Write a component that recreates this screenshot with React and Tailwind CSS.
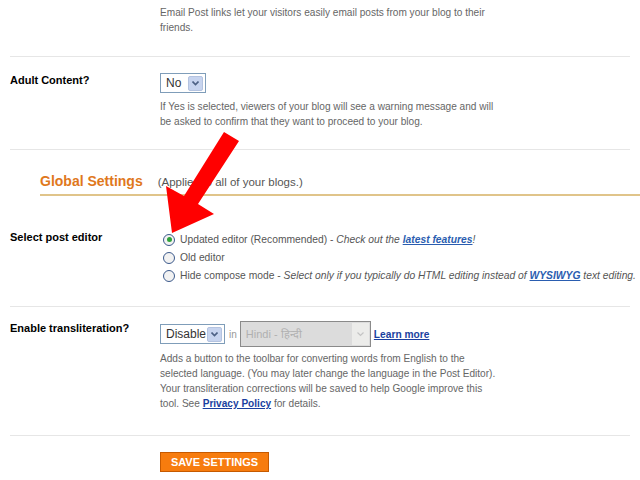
import React from 'react';

const Sep = () => <div className="mx-[10px] border-t border-[#e6e6e6]" />;

const Select = ({ label, className }) => (
  <div className={`flex h-[20px] items-center border border-[#7f9db9] bg-white pl-[5px] pr-[2px] ${className}`}>
    <span className="flex-1 text-[12px] text-[#333]">{label}</span>
    <span className="flex h-[15px] w-[15px] items-center justify-center rounded-[2px] border border-[#b4c3e0] bg-[#c7d4ef]">
      <svg width="7" height="5" viewBox="0 0 7 5"><path d="M0.5 0.5 L3.5 3.5 L6.5 0.5" stroke="#4d6185" strokeWidth="1.6" fill="none" /></svg>
    </span>
  </div>
);

const Radio = ({ checked }) => (
  <span className="flex h-[12px] w-[12px] shrink-0 items-center justify-center rounded-full border border-[#3c5a8c] bg-[#f2f2f2]">
    {checked && <span className="h-[5px] w-[5px] rounded-full bg-[#2ea23a]" />}
  </span>
);

const Label = ({ children }) => (
  <div className="w-[160px] shrink-0 pl-[10px] text-[11px] font-bold text-black">{children}</div>
);

export default function App() {
  return (
    <div className="relative h-[480px] w-[640px] overflow-hidden bg-white font-['Liberation_Sans',Arial,sans-serif] text-[10.1px] leading-[15px] text-[#666]">
      <div className="pl-[160px] pt-[5px] pb-[21px]">
        <p>Email Post links let your visitors easily email posts from your blog to their</p>
        <p>friends.</p>
      </div>
      <Sep />

      <div className="flex pt-[16px] pb-[20px]">
        <Label>Adult Content?</Label>
        <div>
          <Select label="No" className="w-[46px]" />
          <div className="pt-[6px]">
            <p>If Yes is selected, viewers of your blog will see a warning message and will</p>
            <p>be asked to confirm that they want to proceed to your blog.</p>
          </div>
        </div>
      </div>
      <Sep />

      <div className="ml-[40px] mt-[24px] flex items-baseline gap-[15px] border-b-2 border-[#e0c48a] pb-[4px]">
        <span className="text-[14px] font-bold text-[#e0781c]">Global Settings</span>
        <span className="text-[11.5px] text-[#555]">(Applies to all of your blogs.)</span>
      </div>

      <div className="flex pt-[34px] pb-[23px]">
        <Label>Select post editor</Label>
        <div className="flex flex-col gap-[3px] pt-[2px] pl-[3px] text-[10.3px] text-[#555]">
          <div className="flex items-center gap-[5px]">
            <Radio checked />
            <span>Updated editor (Recommended) - <i>Check out the <a className="font-bold text-[#2a5db0] underline">latest features</a>!</i></span>
          </div>
          <div className="flex items-center gap-[5px]">
            <Radio />
            <span>Old editor</span>
          </div>
          <div className="flex items-center gap-[5px]">
            <Radio />
            <span>Hide compose mode - <i>Select only if you typically do HTML editing instead of <a className="font-bold text-[#2a5db0] underline">WYSIWYG</a> text editing.</i></span>
          </div>
        </div>
      </div>
      <Sep />

      <div className="flex pt-[14px] pb-[24px]">
        <Label>Enable transliteration?</Label>
        <div>
          <div className="flex items-center">
            <Select label="Disable" className="w-[65px]" />
            <span className="ml-[4px] mr-[3px] text-[#999]">in</span>
            <div className="flex h-[26px] w-[131px] items-center border border-[#8a8a8a] bg-[#dcdcdc] pl-[5px]">
              <span className="flex-1 text-[11px] text-[#b0b0b0]">Hindi - हिन्दी</span>
              <span className="mr-[1px] flex h-[22px] w-[17px] items-center justify-center bg-[#ececea]">
                <svg width="7" height="5" viewBox="0 0 7 5"><path d="M0.5 0.5 L3.5 3.5 L6.5 0.5" stroke="#c4c4c4" strokeWidth="1.2" fill="none" /></svg>
              </span>
            </div>
            <a className="ml-[3px] text-[10.2px] font-bold text-[#1a3fa0] underline">Learn more</a>
          </div>
          <div className="pt-[4px]">
            <p>Adds a button to the toolbar for converting words from English to the</p>
            <p>selected language. (You may later change the language in the Post Editor).</p>
            <p>Your transliteration corrections will be saved to help Google improve this</p>
            <p>tool. See <a className="font-bold text-[#1a3fa0] underline">Privacy Policy</a> for details.</p>
          </div>
        </div>
      </div>
      <Sep />

      <div className="pl-[160px] pt-[16px]">
        <button className="h-[20px] w-[109px] border border-[#c65a00] bg-[#f77c0e] text-[11px] font-bold text-white">SAVE SETTINGS</button>
      </div>

      <svg className="absolute left-0 top-0" width="640" height="480">
        <polygon points="224,132 239,141 198,204 214,214 172,233 166,186 184,196" fill="#f00" />
      </svg>
    </div>
  );
}
